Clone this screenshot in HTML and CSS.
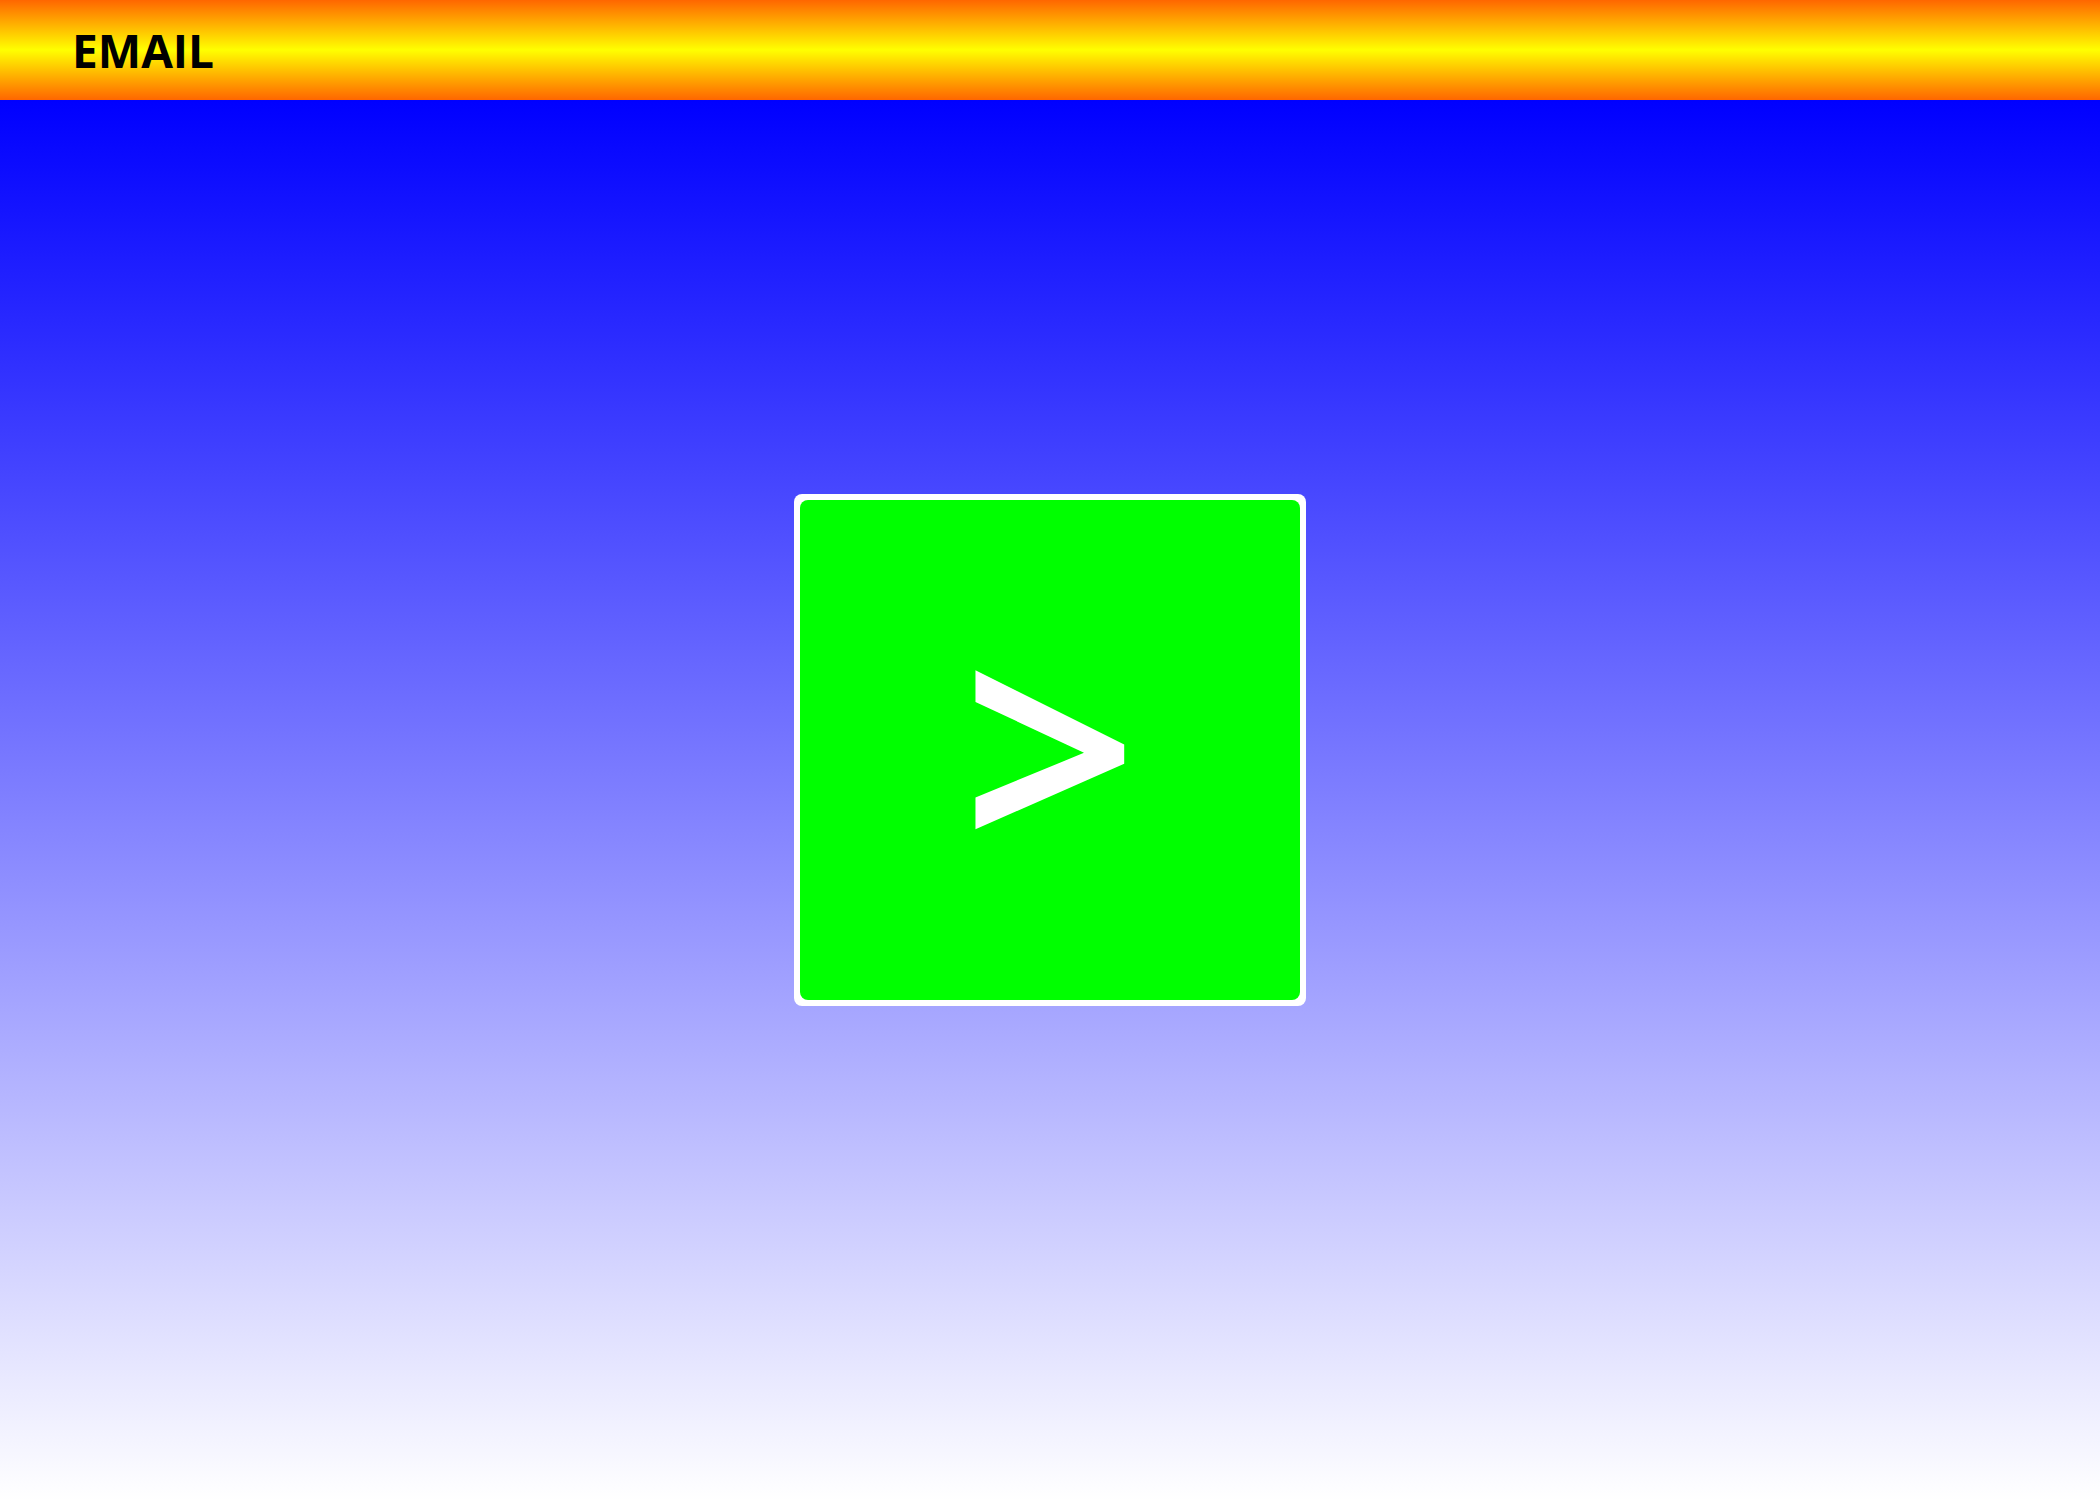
FILE: index.html
```html
<!DOCTYPE html>
<html>
<head>
<meta charset="utf-8">
<link rel="stylesheet" href="styles.css">
</head>
<body>
<header class="topbar"><h1 class="title">EMAIL</h1></header>
<main class="stage">
  <div class="card-frame">
    <button class="card">&gt;</button>
  </div>
</main>
</body>
</html>
```
FILE: styles.css
```css
html, body {
  margin: 0;
  padding: 0;
  height: 100%;
}
body {
  display: flex;
  flex-direction: column;
  font-family: "Open Sans", "Noto Sans", sans-serif;
}
.topbar {
  height: 100px;
  flex: 0 0 100px;
  background: linear-gradient(#ff6600, #ffff00 50%, #ff6600);
  display: flex;
  align-items: center;
  padding-left: 72px;
}
.title {
  margin: 0;
  font-size: 46px;
  font-weight: 700;
  color: #000;
  line-height: 1;
}
.stage {
  flex: 1;
  background: linear-gradient(#0000ff, #ffffff);
  display: flex;
  align-items: center;
  justify-content: center;
  padding-bottom: 100px;
}
.card-frame {
  background: #fff;
  padding: 6px;
  border-radius: 8px;
}
.card {
  display: flex;
  align-items: center;
  justify-content: center;
  width: 500px;
  height: 500px;
  border: 0;
  border-radius: 8px;
  background: #00ff00;
  color: #fff;
  font-family: "Noto Sans", "Open Sans", sans-serif;
  font-weight: 600;
  font-size: 310px;
  line-height: 1;
  padding: 0 0 17px 0;
  box-sizing: border-box;
}
```
